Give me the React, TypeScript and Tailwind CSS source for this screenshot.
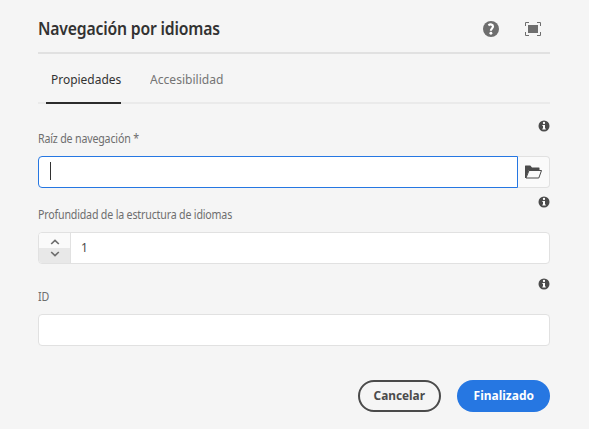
import type { ReactNode } from "react";

function InfoIcon() {
  return (
    <svg width="12" height="12" viewBox="0 0 12 12" className="shrink-0" aria-hidden="true">
      <circle cx="6" cy="6" r="5.5" fill="#4b4b4b" />
      <circle cx="6" cy="3" r="1.15" fill="#fff" />
      <path d="M4.4 4.9h2.6v3.5h.8v1.1H4.3V8.4H5V6h-.6z" fill="#fff" />
    </svg>
  );
}

function HelpIcon() {
  return (
    <svg width="16" height="16" viewBox="0 0 16 16" aria-hidden="true">
      <circle cx="8" cy="8" r="8" fill="#6e6e6e" />
      <path d="M5.4 4.3C7.4 2.8 10 3.5 10 5.5c0 1.9-2.1 2.1-2.1 4.2" fill="none" stroke="#fff" strokeWidth="2.2" />
      <circle cx="7.9" cy="12.2" r="1.45" fill="#fff" />
    </svg>
  );
}

function FullScreenIcon() {
  return (
    <svg width="16" height="14" viewBox="0 0 16 14" aria-hidden="true">
      <path d="M.5 4V.5H4M12 .5h3.5V4M15.5 10v3.5H12M4 13.5H.5V10" fill="none" stroke="#6e6e6e" />
      <path d="M3 3h10v8H3z" fill="#6e6e6e" />
    </svg>
  );
}

function FolderIcon() {
  return (
    <svg width="18" height="14" viewBox="0 0 18 14" className="ml-px" aria-hidden="true">
      <path d="M0 13V1Q0 .5.5.5H5.3L7 2.5H14Q14.5 2.5 14.5 3V5H4L1 13z" fill="#4b4b4b" />
      <path d="M4 5.5H16.5L13.8 13H1z" fill="#fafafa" stroke="#4b4b4b" strokeLinejoin="round" />
    </svg>
  );
}

function Field({ label, children }: { label: string; children: ReactNode }) {
  return (
    <div>
      <div className="flex h-9 items-start justify-between">
        <label className="mt-[9px] origin-left scale-x-[0.887] text-[12px] leading-[19px] tracking-[-0.2px] whitespace-nowrap text-[#6e6e6e]">{label}</label>
        <InfoIcon />
      </div>
      {children}
    </div>
  );
}

export default function App() {
  return (
    <main className="flex h-[429px] w-[589px] flex-col bg-[#f5f5f5] pr-[39px] pl-[38px] font-['Noto_Sans','Open_Sans',sans-serif] antialiased">
      <header className="flex h-[54px] items-center justify-between border-b-2 border-[#e1e1e1] pt-[6px]">
        <h1 className="origin-left scale-x-[0.926] text-[17px] leading-6 font-semibold tracking-[-0.2px] whitespace-nowrap text-[#323232]">Navegación por idiomas</h1>
        <div className="mr-[9px] flex items-center gap-[26px]">
          <HelpIcon />
          <FullScreenIcon />
        </div>
      </header>
      <nav className="flex h-[50px] border-b-2 border-[#eaeaea] pl-2">
        <div className="-mb-0.5 w-[75px] border-b-2 border-[#2c2c2c] pt-[15px] pl-[5px] text-[13px] leading-5 whitespace-nowrap text-[#323232]">
          <span className="inline-block origin-left scale-x-[0.92]">Propiedades</span>
        </div>
        <div className="ml-[29px] pt-[15px] text-[13px] leading-5 whitespace-nowrap text-[#747474]">
          <span className="inline-block origin-left scale-x-[0.93]">Accesibilidad</span>
        </div>
      </nav>
      <section className="pt-4">
        <Field label="Raíz de navegación *">
          <div className="flex h-8">
            <div className="flex w-[480px] items-start rounded-l border border-[#2677e2] bg-white pt-[5px] pl-[11px]">
              <span className="h-[18px] w-px bg-[#323232]" />
            </div>
            <button className="flex w-8 items-center justify-center rounded-r border border-l-0 border-[#e1e1e1] bg-[#fafafa]">
              <FolderIcon />
            </button>
          </div>
        </Field>
        <div className="mt-2">
          <Field label="Profundidad de la estructura de idiomas">
            <div className="flex h-8 overflow-hidden rounded border border-[#e1e1e1] bg-white">
              <div className="flex w-8 flex-col border-r border-[#e1e1e1]">
                <div className="flex h-[15px] items-center justify-center bg-[#fafafa] pt-[3px] pl-px">
                  <svg width="10" height="6" viewBox="0 0 10 6"><path d="M1.2 5 5 1.4 8.8 5" fill="none" stroke="#6e6e6e" strokeWidth="1.7" /></svg>
                </div>
                <div className="flex h-[15px] items-center justify-center bg-[#e8e8e8] pb-[3px] pl-px">
                  <svg width="10" height="6" viewBox="0 0 10 6"><path d="M1.2 1 5 4.6 8.8 1" fill="none" stroke="#6e6e6e" strokeWidth="1.7" /></svg>
                </div>
              </div>
              <span className="origin-left scale-x-[0.92] pt-1 pl-[11px] text-[13px] leading-5 text-[#4b4b4b]">1</span>
            </div>
          </Field>
        </div>
        <div className="mt-[14px]">
          <Field label="ID">
            <div className="h-8 rounded border border-[#e1e1e1] bg-white" />
          </Field>
        </div>
      </section>
      <footer className="mt-[34px] flex justify-end gap-4 text-[13px] font-bold">
        <button className="h-8 w-[83px] rounded-full border-2 border-[#4b4b4b] pb-px text-[#4b4b4b]">
          <span className="inline-block scale-x-[0.91]">Cancelar</span>
        </button>
        <button className="h-8 w-[93px] rounded-full bg-[#2677e2] pb-px text-white">
          <span className="inline-block scale-x-[0.92]">Finalizado</span>
        </button>
      </footer>
    </main>
  );
}
